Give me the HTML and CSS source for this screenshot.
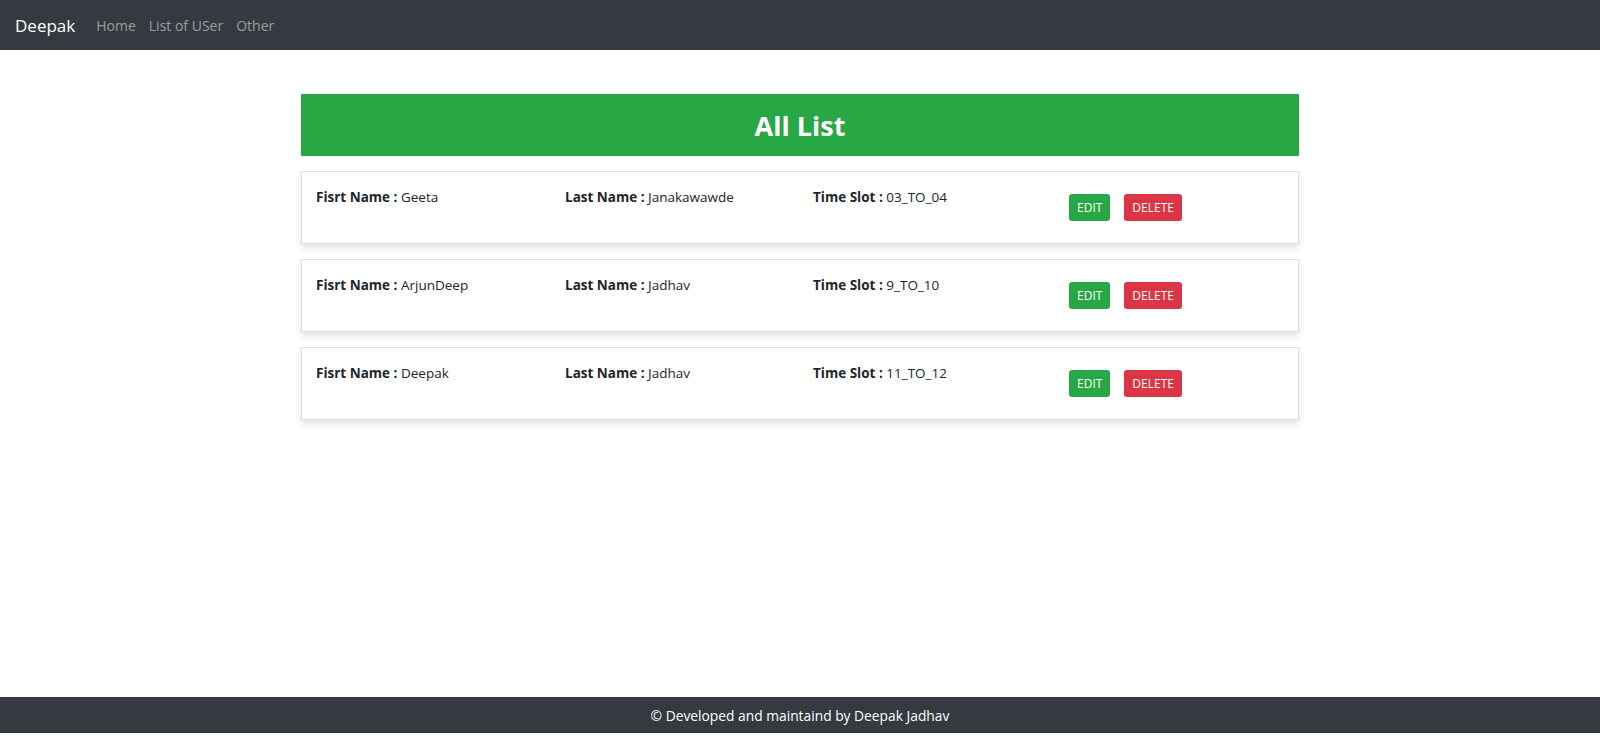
FILE: index.html
```html
<!DOCTYPE html>
<html lang="en">
<head>
<meta charset="utf-8">
<title>All List</title>
<link rel="stylesheet" href="styles.css">
</head>
<body>
<div class="page">
  <nav class="navbar">
    <span class="brand">Deepak</span>
    <a class="nav-link" href="#">Home</a>
    <a class="nav-link" href="#">List of USer</a>
    <a class="nav-link" href="#">Other</a>
  </nav>
  <main class="main">
    <div class="content">
      <h1 class="title">All List</h1>
      <div class="card">
        <div class="field"><b>Fisrt Name :</b> Geeta</div>
        <div class="field"><b>Last Name :</b> Janakawawde</div>
        <div class="field"><b>Time Slot :</b> 03_TO_04</div>
        <div class="actions"><button class="btn btn-edit">EDIT</button><button class="btn btn-delete">DELETE</button></div>
      </div>
      <div class="card">
        <div class="field"><b>Fisrt Name :</b> ArjunDeep</div>
        <div class="field"><b>Last Name :</b> Jadhav</div>
        <div class="field"><b>Time Slot :</b> 9_TO_10</div>
        <div class="actions"><button class="btn btn-edit">EDIT</button><button class="btn btn-delete">DELETE</button></div>
      </div>
      <div class="card">
        <div class="field"><b>Fisrt Name :</b> Deepak</div>
        <div class="field"><b>Last Name :</b> Jadhav</div>
        <div class="field"><b>Time Slot :</b> 11_TO_12</div>
        <div class="actions"><button class="btn btn-edit">EDIT</button><button class="btn btn-delete">DELETE</button></div>
      </div>
    </div>
  </main>
  <footer class="footer">© Developed and maintaind by Deepak Jadhav</footer>
</div>
</body>
</html>
```
FILE: styles.css
```css
* { box-sizing: border-box; }
html, body { margin: 0; padding: 0; }
body {
  font-family: "Open Sans", "Noto Sans", sans-serif;
  color: #212529;
  background: #fff;
  font-size: 14px;
}
.page {
  height: 747px;
  display: flex;
  flex-direction: column;
}
.navbar {
  height: 50px;
  background: #343a40;
  display: flex;
  align-items: center;
  padding: 0 15px;
}
.brand {
  color: #fff;
  font-size: 17px;
  margin-right: 21px;
}
.nav-link {
  color: rgba(255,255,255,.5);
  text-decoration: none;
  font-size: 14px;
  margin-right: 13px;
}
.main {
  flex: 1;
  padding-top: 44px;
}
.content {
  width: 998px;
  margin: 0 auto;
}
.title {
  margin: 0 0 15px;
  height: 62px;
  background: #28a745;
  color: #fff;
  font-size: 27px;
  font-weight: 700;
  display: flex;
  align-items: center;
  justify-content: center;
}
.card {
  height: 73px;
  border: 1px solid #dfdfdf;
  box-shadow: 0 4px 8px rgba(0,0,0,.12);
  margin-bottom: 15px;
  padding: 15px 14px 0;
  display: grid;
  grid-template-columns: 249px 248px 256px auto;
  align-items: start;
}
.field {
  font-size: 13.5px;
  line-height: 20px;
}
.field b { font-weight: 700; }
.actions {
  display: flex;
  gap: 14px;
  margin-top: 7px;
}
.btn {
  border: none;
  border-radius: 3px;
  color: #fff;
  font-family: inherit;
  font-size: 12px;
  height: 27px;
  padding: 0 8px;
}
.btn-edit { background: #28a745; }
.btn-delete { background: #dc3545; }
.footer {
  height: 36px;
  margin-bottom: 14px;
  background: #343a40;
  color: #fff;
  font-size: 13.8px;
  display: flex;
  align-items: center;
  justify-content: center;
}
```
